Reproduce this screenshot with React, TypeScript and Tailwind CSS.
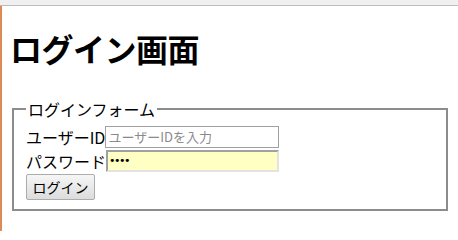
export default function App() {
  return (
    <div className="w-[458px] h-[232px] overflow-hidden bg-white font-['Noto_Sans_CJK_JP',sans-serif] text-black">
      {/* top strip of the browser chrome */}
      <div className="h-[6px] bg-[#f0f0f0] border-b border-[#bdbdbd]" />
      <div className="flex h-[225px]">
        {/* orange left edge */}
        <div className="w-[2px] bg-[#dc8b57] shrink-0" />
        <div className="flex-1 px-[8px]">
          <h1 className="mt-[25px] text-[32px] leading-[34px] font-bold tracking-[-0.5px]">ログイン画面</h1>

          <fieldset className="mx-[2px] mt-[34px] border-2 border-[#8c8c8c] px-[12px] pt-[6px] pb-[9px]">
            <legend className="px-[2px] text-[16px] leading-[20px]">ログインフォーム</legend>

            <div className="flex flex-col gap-[1px]">
              {/* user id row */}
              <div className="flex items-center h-[23px]">
                <span className="text-[16px] leading-[20px]">ユーザーID</span>
                <input
                  type="text"
                  placeholder="ユーザーIDを入力"
                  className="w-[174px] h-[22px] border border-[#a0a0a0] px-[2px] text-[13px] placeholder:text-[#8a8a8a] outline-none"
                />
              </div>

              {/* password row */}
              <div className="flex items-center h-[23px]">
                <span className="text-[16px] leading-[20px]">パスワード</span>
                <input
                  type="password"
                  defaultValue="abcd"
                  className="w-[173px] h-[22px] border-2 border-t-[#a0a0a0] border-l-[#a0a0a0] border-r-[#e3e3e3] border-b-[#e3e3e3] bg-[#ffffc4] px-[1px] text-[11px] font-['DejaVu_Sans',sans-serif] tracking-[-1.5px] outline-none"
                />
              </div>

              {/* submit */}
              <div className="pt-[1px]">
                <button className="w-[69px] h-[26px] rounded-[2px] border border-[#acacac] bg-gradient-to-b from-[#f6f6f6] to-[#dcdcdc] text-[14px] leading-[20px]">
                  ログイン
                </button>
              </div>
            </div>
          </fieldset>
        </div>
      </div>
    </div>
  )
}
